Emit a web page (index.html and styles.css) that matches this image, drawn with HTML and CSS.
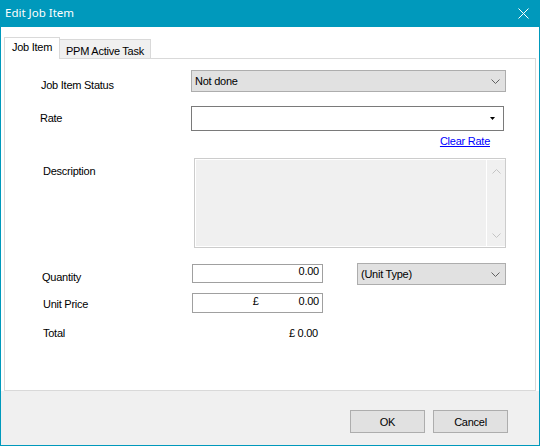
FILE: index.html
```html
<!DOCTYPE html>
<html>
<head>
<meta charset="utf-8">
<link rel="stylesheet" href="styles.css">
</head>
<body>
<div class="window">
  <div class="titlebar">
    <span class="title">Edit Job Item</span>
    <svg class="close" width="11" height="11" viewBox="0 0 11 11"><path d="M0.5 0.5 L10.5 10.5 M10.5 0.5 L0.5 10.5" stroke="#fff" stroke-width="1" fill="none"/></svg>
  </div>
  <div class="client">
    <div class="tabarea">
      <div class="tabs">
        <div class="tab tab-active">Job Item</div>
        <div class="tab tab-inactive">PPM Active Task</div>
      </div>
      <div class="tabpage">
        <div class="row row-status">
          <div class="label lbl-status">Job Item Status</div>
          <div class="combo combo-status">
            <span class="combo-text">Not done</span>
            <svg class="chev" width="9" height="5" viewBox="0 0 9 5"><path d="M0.5 0.5 L4.5 4.5 L8.5 0.5" stroke="#606060" stroke-width="1" fill="none"/></svg>
          </div>
        </div>
        <div class="row row-rate">
          <div class="label lbl-rate">Rate</div>
          <div class="combo-edit">
            <svg class="tri" width="5" height="3" viewBox="0 0 5 3"><path d="M0 0 H5 L2.5 3 Z" fill="#000"/></svg>
          </div>
        </div>
        <div class="row row-link">
          <a class="link" href="#">Clear Rate</a>
        </div>
        <div class="row row-desc">
          <div class="label lbl-desc">Description</div>
          <div class="memo">
            <div class="memo-body"></div>
            <div class="memo-scroll">
              <svg width="9" height="5" viewBox="0 0 9 5"><path d="M0.5 4.5 L4.5 0.5 L8.5 4.5" stroke="#c4c4c4" stroke-width="1" fill="none"/></svg>
              <svg width="9" height="5" viewBox="0 0 9 5"><path d="M0.5 0.5 L4.5 4.5 L8.5 0.5" stroke="#c4c4c4" stroke-width="1" fill="none"/></svg>
            </div>
          </div>
        </div>
        <div class="row row-qty">
          <div class="label lbl-qty">Quantity</div>
          <div class="textbox tb-qty">0.00</div>
          <div class="combo combo-unit">
            <span class="combo-text">(Unit Type)</span>
            <svg class="chev" width="9" height="5" viewBox="0 0 9 5"><path d="M0.5 0.5 L4.5 4.5 L8.5 0.5" stroke="#606060" stroke-width="1" fill="none"/></svg>
          </div>
        </div>
        <div class="row row-price">
          <div class="label lbl-price">Unit Price</div>
          <div class="textbox tb-price"><span class="cur">£</span><span>0.00</span></div>
        </div>
        <div class="row row-total">
          <div class="label lbl-total">Total</div>
          <div class="total-value">£ 0.00</div>
        </div>
      </div>
    </div>
    <div class="footer">
      <button class="btn">OK</button>
      <button class="btn">Cancel</button>
    </div>
  </div>
</div>
</body>
</html>
```

FILE: styles.css
```css
html, body {
  margin: 0;
  padding: 0;
  background: #ffffff;
}
body {
  font-family: "Liberation Sans", Arial, sans-serif;
  font-size: 11px;
  line-height: 13px;
  letter-spacing: -0.25px;
  color: #000;
}
.window {
  width: 540px;
  height: 446px;
  box-sizing: border-box;
  border: 1px solid #0099bc;
  border-top: 0;
  display: flex;
  flex-direction: column;
}
.titlebar {
  height: 27px;
  flex: none;
  background: #0099bc;
  display: flex;
  align-items: center;
  justify-content: space-between;
  padding: 0 10px 0 4px;
}
.title {
  color: #fff;
  font-family: "Noto Sans", "Liberation Sans", sans-serif;
  font-size: 11.5px;
  line-height: 16px;
  letter-spacing: 0;
  margin-top: -1px;
}
.close {
  display: block;
  margin-top: -1px;
}
.client {
  flex: 1;
  display: flex;
  flex-direction: column;
}
.tabarea {
  flex: none;
  background: #fff;
  padding: 10px 3px 0 3px;
}
.tabs {
  height: 21px;
  display: flex;
  align-items: flex-end;
}
.tab {
  box-sizing: border-box;
  border: 1px solid #d9d9d9;
  border-bottom: 0;
  text-align: center;
}
.tab-active {
  width: 56px;
  height: 22px;
  margin-bottom: -1px;
  background: #fff;
  position: relative;
  z-index: 1;
  padding-top: 3px;
}
.tab-inactive {
  width: 91px;
  height: 19px;
  border-left: 0;
  background: #f0f0f0;
  padding-top: 5px;
}
.tabpage {
  box-sizing: border-box;
  height: 333px;
  border: 1px solid #d9d9d9;
  background: #fff;
}
.row {
  display: flex;
  align-items: flex-start;
}
.label {
  box-sizing: border-box;
  flex: none;
}
.row-status { margin-top: 11px; height: 22px; }
.row-rate { margin-top: 14px; height: 25px; }
.row-link { margin-top: 4px; height: 13px; justify-content: flex-end; padding-right: 45px; }
.row-desc { margin-top: 10px; height: 90px; }
.row-qty { margin-top: 15px; height: 22px; }
.row-price { margin-top: 8px; height: 20px; }
.row-total { margin-top: 14px; height: 13px; }

.lbl-status { margin-left: 36px; width: 150px; padding-top: 9px; }
.lbl-rate { margin-left: 35px; width: 151px; padding-top: 6px; }
.lbl-desc { margin-left: 38px; width: 151px; padding-top: 7px; }
.lbl-qty { margin-left: 37px; width: 150px; padding-top: 8px; }
.lbl-price { margin-left: 38px; width: 149px; padding-top: 5px; }
.lbl-total { margin-left: 38px; width: 149px; }

.combo {
  box-sizing: border-box;
  height: 22px;
  background: #e1e1e1;
  border: 1px solid #adadad;
  display: flex;
  align-items: center;
  justify-content: space-between;
  padding: 0 5px 0 3px;
}
.combo-text {
  line-height: 20px;
}
.chev {
  display: block;
  margin-top: 1px;
}
.combo-status { width: 315px; }
.combo-unit { width: 149px; margin-left: 34px; }

.combo-edit {
  box-sizing: border-box;
  width: 313px;
  height: 25px;
  border: 1px solid #7a7a7a;
  background: #fff;
  display: flex;
  align-items: center;
  justify-content: flex-end;
  padding-right: 8px;
}
.tri { display: block; }

.link {
  color: #0000ff;
  text-decoration: underline;
}

.memo {
  box-sizing: border-box;
  width: 312px;
  height: 90px;
  border: 1px solid #cccccc;
  background: #f0f0f0;
  display: flex;
}
.memo-body {
  flex: 1;
  border: 1px solid #ffffff;
  border-right: 0;
}
.memo-scroll {
  box-sizing: border-box;
  width: 19px;
  border-left: 1px solid #ffffff;
  border-top: 1px solid #ffffff;
  border-bottom: 1px solid #ffffff;
  display: flex;
  flex-direction: column;
  justify-content: space-between;
  align-items: center;
  padding: 9px 0 8px;
}
.memo-scroll svg { display: block; }

.textbox {
  box-sizing: border-box;
  width: 131px;
  background: #fff;
  border: 1px solid #a0a0a0;
  display: flex;
  justify-content: flex-end;
  padding-right: 3px;
}
.tb-qty { height: 19px; margin-top: 1px; }
.tb-price { height: 20px; padding-top: 1px; }
.cur { margin-right: 40px; }

.total-value {
  width: 126px;
  text-align: right;
}

.footer {
  flex: 1;
  background: #f0f0f0;
  display: flex;
  justify-content: flex-end;
  align-items: flex-start;
  gap: 8px;
  padding: 19px 31px 0 0;
}
.btn {
  box-sizing: border-box;
  width: 75px;
  height: 23px;
  background: #e1e1e1;
  border: 1px solid #adadad;
  border-radius: 0;
  font-family: "Liberation Sans", Arial, sans-serif;
  font-size: 11px;
  letter-spacing: -0.25px;
  color: #000;
  padding: 0;
  margin: 0;
}
```
